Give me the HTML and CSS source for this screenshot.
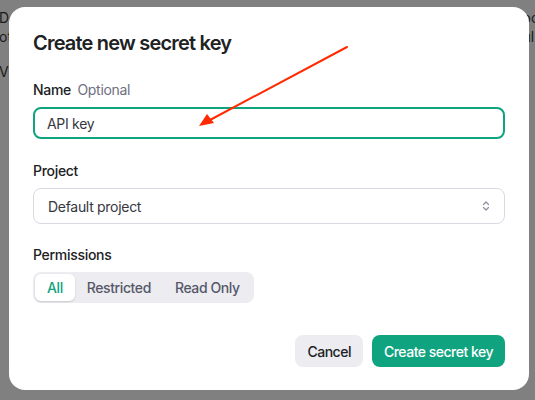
FILE: index.html
```html
<!DOCTYPE html>
<html>
<head>
<meta charset="utf-8">
<link rel="stylesheet" href="styles.css">
</head>
<body>
<div class="backdrop">
  <div class="bg-text left">
    <p>Do</p>
    <p>ot</p>
    <p class="gap">V</p>
  </div>
  <div class="bg-text right">
    <p>oc</p>
    <p>ul</p>
  </div>
  <div class="modal">
    <h1 class="title">Create new secret key</h1>
    <div class="field f1">
      <div class="label">Name <span class="optional">Optional</span></div>
      <div class="input focused">API key</div>
    </div>
    <div class="field f2">
      <div class="label">Project</div>
      <div class="input select">
        <span>Default project</span>
        <svg class="chev" width="10" height="12" viewBox="0 0 10 12"><path d="M2.5 4.5 L5 2 L7.5 4.5 M2.5 7.5 L5 10 L7.5 7.5" fill="none" stroke="#8e8ea0" stroke-width="1.2" stroke-linecap="round" stroke-linejoin="round"/></svg>
      </div>
    </div>
    <div class="field f3">
      <div class="label">Permissions</div>
      <div class="segmented">
        <span class="seg active">All</span>
        <span class="seg">Restricted</span>
        <span class="seg">Read Only</span>
      </div>
    </div>
    <div class="actions">
      <button class="btn secondary">Cancel</button>
      <button class="btn primary">Create secret key</button>
    </div>
    <svg class="arrow" width="535" height="400" viewBox="0 0 535 400">
      <line x1="347" y1="47" x2="210" y2="120" stroke="#ff2a00" stroke-width="2" stroke-linecap="round"/>
      <polygon points="199,126 207,114 214,123" fill="#ff2a00"/>
    </svg>
  </div>
</div>
</body>
</html>
```
FILE: styles.css
```css
* { box-sizing: border-box; }
html, body { margin: 0; padding: 0; }
body {
  width: 535px;
  height: 400px;
  overflow: hidden;
  font-family: Inter, "Noto Sans", sans-serif;
  background: #808080;
}
.backdrop {
  position: relative;
  width: 535px;
  height: 400px;
  padding: 7px 6px 10px 9px;
}
.bg-text {
  position: absolute;
  top: 8px;
  font-size: 14px;
  color: #1a1a1a;
  line-height: 19px;
}
.bg-text p { margin: 0; }
.bg-text .gap { margin-top: 16px; }
.bg-text.left { left: -1px; }
.bg-text.right { right: -4px; }
.modal {
  position: relative;
  background: #fff;
  border-radius: 16px;
  height: 383px;
  width: 520px;
  padding: 24px 24px 0 24px;
  display: flex;
  flex-direction: column;
}
.title {
  margin: 0;
  font-size: 20px;
  font-weight: 600;
  color: #202123;
  line-height: 24px;
  letter-spacing: -0.8px;
}
.field { display: flex; flex-direction: column; }
.f1 { margin-top: 26px; }
.f2 { margin-top: 23px; }
.f3 { margin-top: 22px; }
.label {
  font-size: 14px;
  font-weight: 500;
  color: #202123;
  line-height: 18px;
  margin-bottom: 8px;
  letter-spacing: -0.3px;
}
.optional { color: #6e6e80; font-weight: 400; margin-left: 3px; }
.input {
  height: 33px;
  border: 1px solid #d9d9e3;
  border-radius: 8px;
  font-size: 14px;
  color: #353740;
  display: flex;
  align-items: center;
  padding: 0 14px;
  letter-spacing: -0.3px;
}
.input.focused {
  border: 2px solid #10a37f;
  padding-left: 12px;
  height: 32px;
}
.select { height: 36px; justify-content: space-between; padding-right: 13px; }
.segmented {
  display: flex;
  align-self: flex-start;
  background: #ececf1;
  border-radius: 8px;
  padding: 2px;
  height: 31px;
}
.seg {
  font-size: 14px;
  font-weight: 500;
  color: #565869;
  padding: 0 12px;
  display: flex;
  align-items: center;
  border-radius: 6px;
  letter-spacing: -0.4px;
}
.seg.active {
  background: #fff;
  color: #10a37f;
  box-shadow: 0 1px 2px rgba(0,0,0,0.15);
}
.actions {
  margin-top: auto;
  margin-bottom: 23px;
  display: flex;
  justify-content: flex-end;
  gap: 9px;
}
.btn {
  font-family: Inter, "Noto Sans", sans-serif;
  font-size: 14px;
  font-weight: 500;
  height: 32px;
  border: none;
  border-radius: 8px;
  padding: 0 12px;
  letter-spacing: -0.5px;
}
.btn.secondary { background: #ececf1; color: #202123; }
.btn.primary { background: #10a37f; color: #fff; }
.arrow {
  position: absolute;
  left: -9px;
  top: -7px;
  pointer-events: none;
}
```
